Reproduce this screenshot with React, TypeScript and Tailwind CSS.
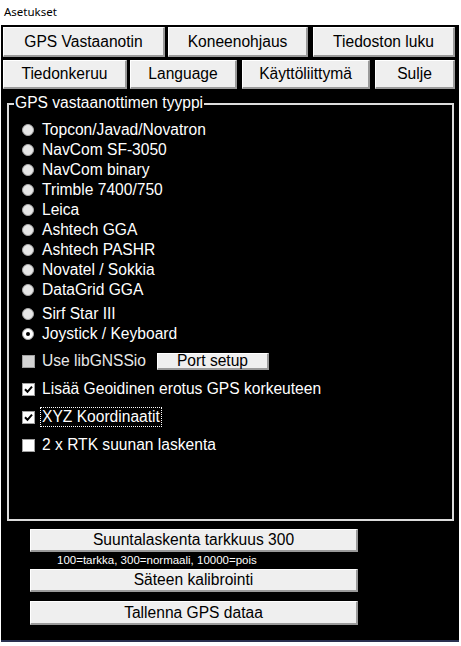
import React from "react";

const radios = [
  "Topcon/Javad/Novatron",
  "NavCom SF-3050",
  "NavCom binary",
  "Trimble 7400/750",
  "Leica",
  "Ashtech GGA",
  "Ashtech PASHR",
  "Novatel / Sokkia",
  "DataGrid GGA",
];

function Btn({ label, className }: { label: string; className: string }) {
  return (
    <div
      className={
        "flex items-center justify-center bg-[#efefef] border-t border-l border-t-white border-l-white border-b-2 border-r-2 border-b-[#9a9a9a] border-r-[#9a9a9a] text-black " +
        className
      }
    >
      {label}
    </div>
  );
}

function Radio({ label, checked }: { label: string; checked?: boolean }) {
  return (
    <div className="flex h-[20px] items-center">
      <span
        className={
          "flex h-[12px] w-[12px] items-center justify-center rounded-full border border-[#a8a8a8] " +
          (checked ? "bg-white" : "bg-[#e6e6e6]")
        }
      >
        {checked && <span className="h-[4px] w-[4px] rounded-full bg-black" />}
      </span>
      <span className="ml-[8px]">{label}</span>
    </div>
  );
}

function Check({ checked, disabled }: { checked?: boolean; disabled?: boolean }) {
  return (
    <span
      className={
        "flex h-[13px] w-[13px] items-center justify-center border border-[#a0a0a0] " +
        (disabled ? "bg-[#d4d4d4]" : "bg-white")
      }
    >
      {checked && (
        <svg width="9" height="9" viewBox="0 0 9 9">
          <path d="M1 4.2 L3.5 6.8 L8 1.6" fill="none" stroke="#000" strokeWidth="2" />
        </svg>
      )}
    </span>
  );
}

export default function App() {
  return (
    <div className="h-[646px] w-[461px] bg-white font-['Liberation_Sans',Arial,sans-serif] text-[15.6px] text-white">
      <div className="flex h-[25px] items-center pl-[4px] pb-[1px] font-['Noto_Sans',sans-serif] text-[11.5px] text-black">
        Asetukset
      </div>
      <div className="ml-[1px] mr-[2px] h-[617px] bg-black pt-[2px] border-b-2 border-b-[#2a3050]">
        <div className="flex h-[30px] pl-[2px]">
          <Btn label="GPS Vastaanotin" className="w-[162px]" />
          <Btn label="Koneenohjaus" className="ml-[3px] w-[140px]" />
          <Btn label="Tiedoston luku" className="ml-[5px] w-[142px]" />
        </div>
        <div className="mt-[3px] flex h-[29px] pl-[2px]">
          <Btn label="Tiedonkeruu" className="w-[124px]" />
          <Btn label="Language" className="ml-[3px] w-[107px]" />
          <Btn label="Käyttöliittymä" className="ml-[5px] w-[128px]" />
          <Btn label="Sulje" className="ml-[5px] w-[80px]" />
        </div>
        <div className="relative ml-[6px] mt-[14px] h-[418px] w-[447px] border-2 border-[#dcdcdc]">
          <span className="absolute left-[5px] top-[-12px] bg-black px-[1px] leading-[20px]">
            GPS vastaanottimen tyyppi
          </span>
          <div className="flex flex-col pl-[13px] pt-[15px]">
            {radios.map((r) => (
              <Radio key={r} label={r} />
            ))}
            <div className="mt-[4px]">
              <Radio label="Sirf Star III" />
            </div>
            <Radio label="Joystick / Keyboard" checked />
            <div className="mt-[3px] flex h-[28px] items-center">
              <Check disabled />
              <span className="ml-[7px] text-[#e8e8e8]">Use libGNSSio</span>
              <Btn label="Port setup" className="ml-[11px] h-[17px] w-[112px]" />
            </div>
            <div className="flex h-[28px] items-center">
              <Check checked />
              <span className="ml-[7px]">Lisää Geoidinen erotus GPS korkeuteen</span>
            </div>
            <div className="flex h-[28px] items-center">
              <Check checked />
              <span className="ml-[5px] border border-dotted border-white px-[1px] leading-[18px]">
                XYZ Koordinaatit
              </span>
            </div>
            <div className="flex h-[28px] items-center">
              <Check />
              <span className="ml-[7px]">2 x RTK suunan laskenta</span>
            </div>
          </div>
        </div>
        <div className="ml-[29px] mt-[8px] flex w-[328px] flex-col">
          <Btn label="Suuntalaskenta tarkkuus 300" className="h-[23px]" />
          <div className="flex h-[17px] items-center pl-[27px] text-[11.5px]">
            100=tarkka, 300=normaali, 10000=pois
          </div>
          <Btn label="Säteen kalibrointi" className="h-[23px]" />
          <Btn label="Tallenna GPS dataa" className="mt-[9px] h-[24px]" />
        </div>
      </div>
    </div>
  );
}
